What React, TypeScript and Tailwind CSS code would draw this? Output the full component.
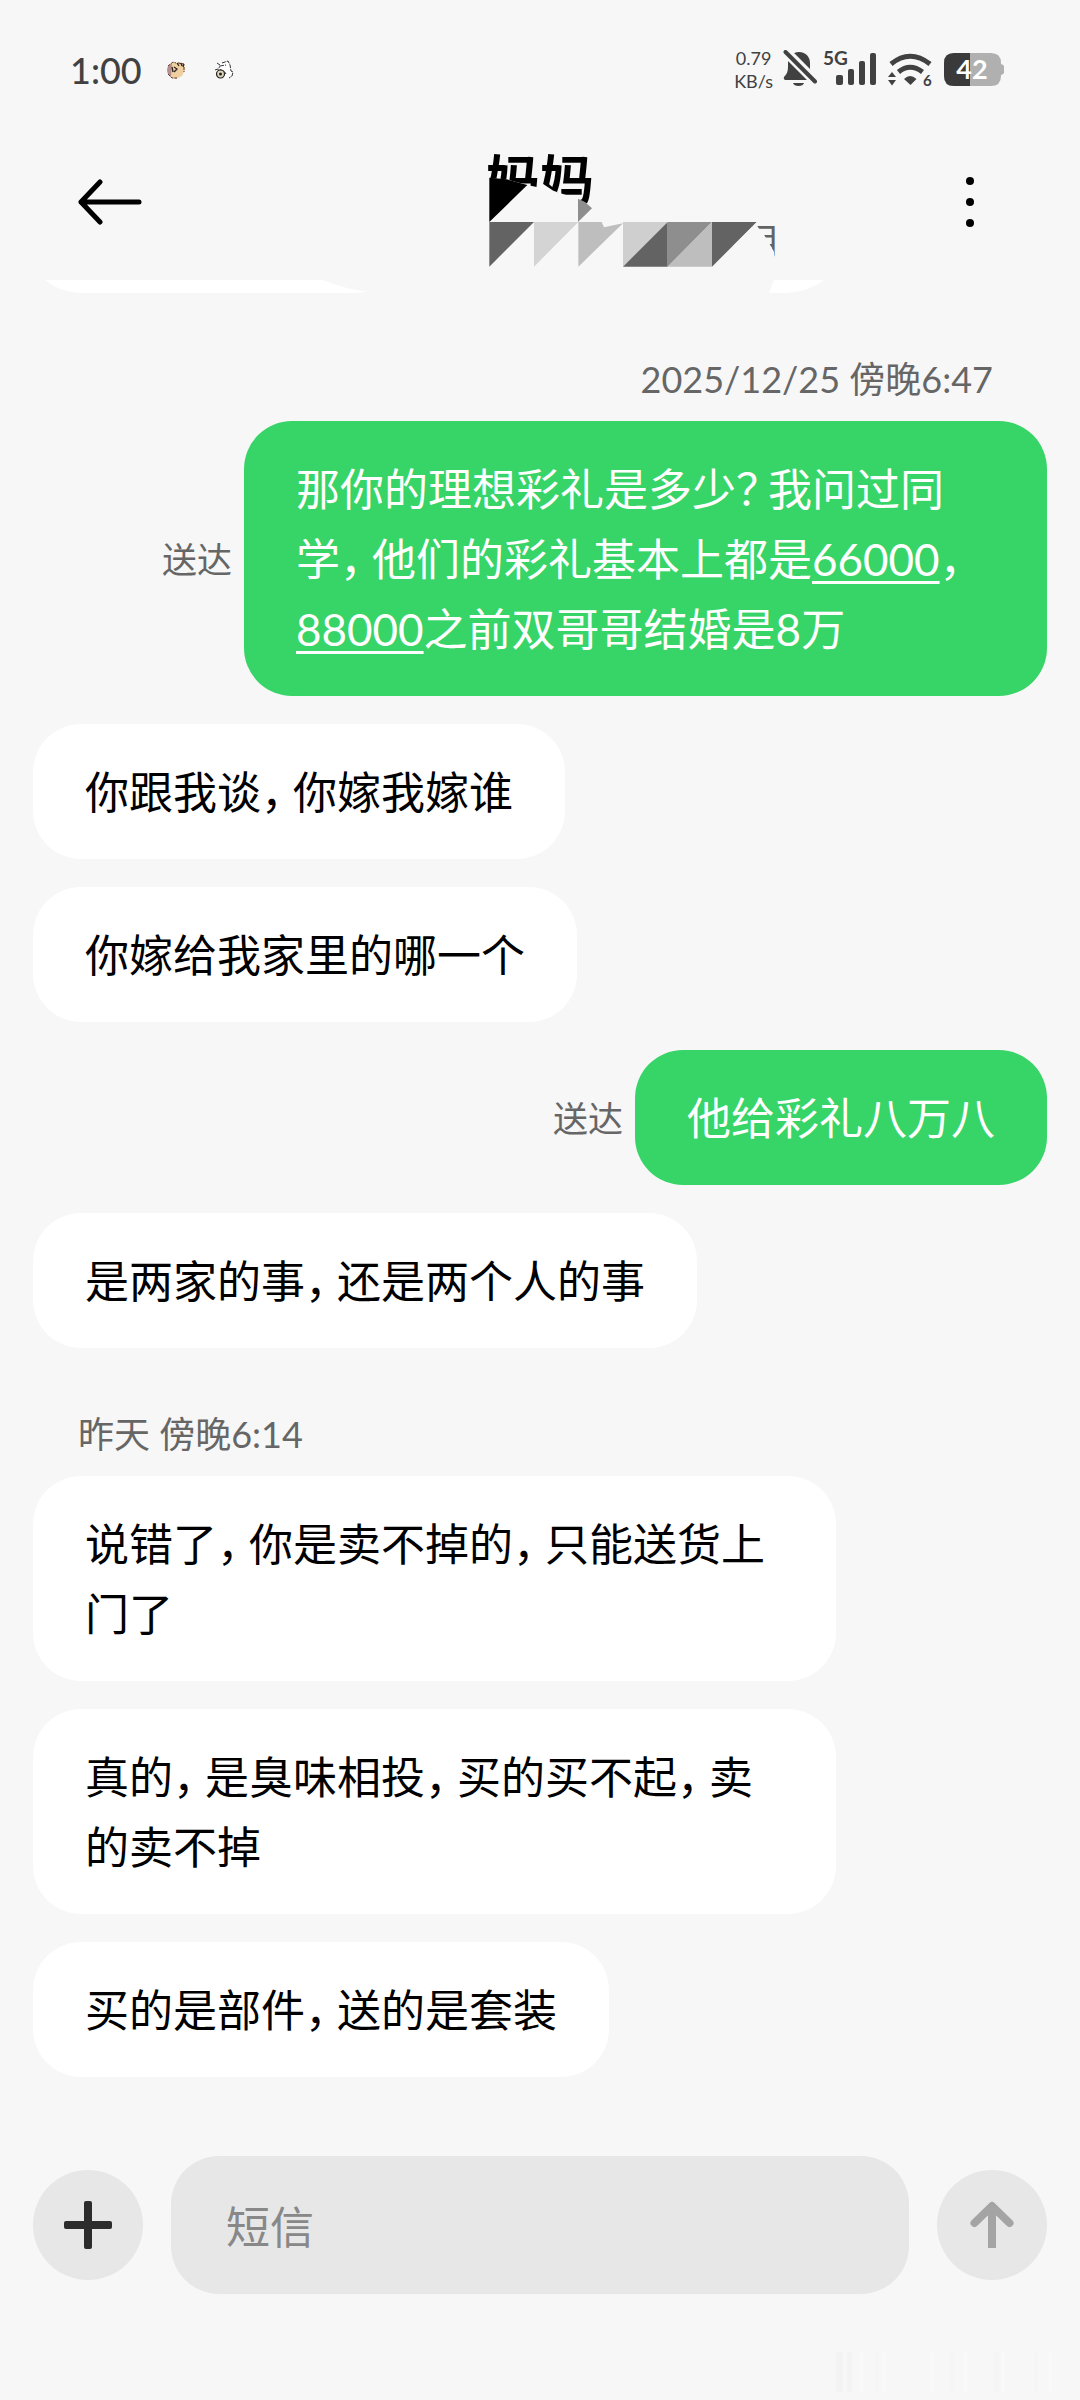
import type { ReactNode } from "react";

interface Message {
  id: number;
  from: "me" | "mom";
  text: string;
  stamp?: string;
}

const messages: Message[] = [
  {
    id: 1,
    from: "me",
    text: "那你的理想彩礼是多少？我问过同学，他们的彩礼基本上都是66000，88000之前双哥哥结婚是8万",
    stamp: "2025/12/25 傍晚6:47",
  },
  { id: 2, from: "mom", text: "你跟我谈，你嫁我嫁谁" },
  { id: 3, from: "mom", text: "你嫁给我家里的哪一个" },
  { id: 4, from: "me", text: "他给彩礼八万八" },
  { id: 5, from: "mom", text: "是两家的事，还是两个人的事" },
  { id: 6, from: "mom", text: "说错了，你是卖不掉的，只能送货上门了", stamp: "昨天 傍晚6:14" },
  { id: 7, from: "mom", text: "真的，是臭味相投，买的买不起，卖的卖不掉" },
  { id: 8, from: "mom", text: "买的是部件，送的是套装" },
];

// Half-width forms for punctuation, links for long numbers
function renderText(text: string): ReactNode[] {
  return text.split(/([，？]|\d{5,})/).map((part, i) => {
    if (part === "，" || part === "？") {
      return (
        <span key={i} className="mr-[10px] [font-feature-settings:'halt']">
          {part}
        </span>
      );
    }
    if (/^\d{5,}$/.test(part)) {
      return (
        <a key={i} href={`tel:${part}`} className="underline decoration-[3px] underline-offset-[5px]">
          {part}
        </a>
      );
    }
    return part;
  });
}

function StatusBar() {
  return (
    <div className="flex h-[140px] items-center justify-between pl-[70px] pr-[76px] text-[#414141]">
      <div className="flex items-center">
        <span className="text-[36px] font-medium leading-none">1:00</span>
        {/* Notification stickers */}
        <svg className="ml-6 size-5" viewBox="0 0 20 20" aria-hidden="true">
          <path d="M2 6 L7 2 L10 3 L13 2 L18 4 L19 10 L16 16 L10 19 L4 17 L1 12 Z" fill="#f0cfa0" />
          <path d="M2 6 L6 3 L5 17 L2 14 L1 10 Z" fill="#b58f8c" />
          <path d="M2 6 L7 2 L10 3 M12 3 L18 4 M18 7 L18 12 M2 14 L6 18 L11 18" fill="none" stroke="#5a3a34" strokeWidth="1" strokeDasharray="3 1" />
          <path d="M6 7 L7 12 M8 7 L11 9 L8 12 M11 3 L13 6 M15 3 L16 6 M18 4 L17 7" fill="none" stroke="#2b2020" strokeWidth="1.3" />
        </svg>
        <svg className="ml-7 size-5" viewBox="0 0 20 20" aria-hidden="true">
          <path d="M4 9 L5 5 L4 3 L8 3 L14 1 L16 5 L17 11 L19 12 L18 16 L15 18 L6 18 L2 16 L1 12 Z" fill="#fff" />
          <path d="M3 3 L6 5 L5 8 M8 3 L14 1 L16 5 L17 11 L19 12 L18 16 L15 18 M6 6 L12 5 M1 10 L4 9 L10 11 L12 14" fill="none" stroke="#333" strokeWidth="1" strokeDasharray="4 1" />
          <circle cx="6.500" cy="14" r="4" fill="#dcd6bc" stroke="#222" strokeWidth="1.2" />
          <circle cx="6.500" cy="14" r="1.5" fill="#222" />
        </svg>
      </div>

      <div className="flex items-center">
        <div className="text-center text-[18px] leading-[23px]">
          <div>0.79</div>
          <div>KB/s</div>
        </div>
        {/* Muted bell */}
        <svg className="ml-[10px] h-10 w-[34px]" viewBox="0 0 34 40" aria-hidden="true">
          <path d="M16 2 C23 2 27 7 27 13 L27 19 C27 23 29 25 31 28 L31 30 L2 30 Q0 29 1 27 C4 24 5 21 5 17 L5 13 C5 7 9 2 16 2 Z" fill="currentColor" />
          <path d="M10 33 L21 33 Q20 36 15.500 36 Q11 36 10 33 Z" fill="currentColor" />
          <path d="M0 -1 L36 35" stroke="#f7f7f7" strokeWidth="10" />
          <path d="M2.500 2 L32 31.500" stroke="currentColor" strokeWidth="4" strokeLinecap="round" />
        </svg>
        {/* Cell signal */}
        <svg className="ml-[6px] h-10 w-[54px] overflow-visible" viewBox="0 0 54 40" fill="currentColor" aria-hidden="true">
          <text x="0" y="15" fontSize="19" fontWeight="700">5G</text>
          <rect x="13" y="25" width="7" height="10" rx="2" />
          <rect x="25" y="19" width="6" height="16" rx="2" />
          <rect x="36" y="11" width="6" height="24" rx="2" />
          <rect x="47" y="3" width="6" height="32" rx="2" />
        </svg>
        {/* Wi-Fi 6 */}
        <svg className="ml-[11px] h-10 w-[44px] overflow-visible" viewBox="0 0 44 40" fill="currentColor" aria-hidden="true">
          <path d="M3 14 Q22 -1.500 42 14" fill="none" stroke="currentColor" strokeWidth="5" />
          <path d="M10.500 22 Q22 12.500 34.500 22" fill="none" stroke="currentColor" strokeWidth="5" />
          <path d="M16 29 Q22 23 28.500 29 L22.500 35 Z" />
          <path d="M4 22 L8 27 L0 27 Z M0 30 L8 30 L4 35.500 Z" />
          <text x="35" y="36" fontSize="15" fontWeight="700">6</text>
        </svg>
        {/* Battery */}
        <svg className="ml-3 h-10 w-[60px]" viewBox="0 0 60 40" aria-hidden="true">
          <path d="M10 3 H47 Q57 3 57 13 V26 Q57 36 47 36 H10 Q0 36 0 26 V13 Q0 3 10 3 Z" fill="#b0b0b0" />
          <path d="M57 14 Q61 15 60.500 19.500 Q61 24 57 25 Z" fill="#b0b0b0" />
          <path d="M10 3 H26 V36 H10 Q0 36 0 26 V13 Q0 3 10 3 Z" fill="#3a3a3a" />
          <text x="28" y="29" fontSize="27" fontWeight="700" textAnchor="middle" fill="#fff">42</text>
        </svg>
      </div>
    </div>
  );
}

// Faceted patches hiding the lower half of the title and the phone number
function PrivacyMosaic() {
  return (
    <svg
      className="pointer-events-none absolute left-1/2 top-[-10px] h-[170px] w-[600px] -translate-x-1/2"
      viewBox="-600 0 1800 510"
      aria-hidden="true"
    >
      <path d="M130 143 L200 148 L262 165 L290 171 L304 158 L340 182 L362 190 L413 206 L435 218 L470 230 L470 280 L130 280 Z" fill="#f7f7f7" />
      <path d="M148 143 L200 148 L262 165 L148 276 Z" fill="#000" />
      <path d="M414 206 L435 216 L456 235 L414 276 Z" fill="#8e8e8e" />
      <path d="M148 276 H282 L148 410 Z" fill="#636363" />
      <path d="M282 276 H415 L282 410 Z" fill="#d4d4d4" />
      <path d="M415 276 H485 L492 292 L549 280 L415 410 Z" fill="#bebebe" />
      <path d="M549 276 H683 L549 410 Z" fill="#cfcfcf" />
      <path d="M683 276 V410 H549 Z" fill="#636363" />
      <path d="M683 276 H816 L683 410 Z" fill="#8e8e8e" />
      <path d="M816 276 V410 H683 Z" fill="#bebebe" />
      <path d="M816 276 H950 L816 410 Z" fill="#636363" />
      <text x="915" y="375" fontSize="108" fill="#636363">月</text>
      <path d="M950 277 L953 290 L972 314 L985 335 L1002 365 L1005 400 L880 400 L880 347 Z" fill="#f7f7f7" />
    </svg>
  );
}

function Header() {
  return (
    <header className="relative grid h-[140px] grid-cols-[1fr_auto_1fr] items-center px-[78px] pb-4">
      <button type="button" aria-label="返回" className="justify-self-start">
        <svg className="h-12 w-16" viewBox="0 0 64 48" fill="none" stroke="#000" strokeWidth="5" strokeLinecap="round" strokeLinejoin="round" aria-hidden="true">
          <path d="M61 24 H3 M22 4 L3 24 L22 44" />
        </svg>
      </button>
      <div className="text-center">
        <h1 className="text-[54px] font-semibold leading-[78px] text-black">妈妈</h1>
        <div className="h-[42px]" />
      </div>
      <button type="button" aria-label="更多" className="justify-self-end">
        <svg className="h-14 w-16" viewBox="0 0 64 56" aria-hidden="true">
          <circle cx="32" cy="7" r="4" />
          <circle cx="32" cy="28" r="4" />
          <circle cx="32" cy="49" r="4" />
        </svg>
      </button>
      <PrivacyMosaic />
    </header>
  );
}

function MessageRow({ message }: { message: Message }) {
  const mine = message.from === "me";
  return (
    <li className={message.stamp ? "pt-[34px]" : ""}>
      {message.stamp && (
        <time
          className={[
            "mb-[18px] block pl-[45px] pr-[54px] text-[36px] leading-[48px] text-[#666]",
            mine ? "text-right" : "text-left",
          ].join(" ")}
        >
          {message.stamp}
        </time>
      )}
      <div className={["flex items-center gap-3", mine ? "justify-end" : ""].join(" ")}>
        {mine && <span className="shrink-0 text-[35px] leading-[48px] text-[#666]">送达</span>}
        <p
          className={[
            "max-w-[803px] rounded-[48px] px-[52px] pb-8 pt-[33px] text-[44px] leading-[70px]",
            mine ? "bg-[#37d468] text-white" : "bg-white text-black",
          ].join(" ")}
        >
          {renderText(message.text)}
        </p>
      </div>
    </li>
  );
}

function Composer() {
  return (
    <form className="mt-auto flex items-center gap-7 px-[33px] pb-[106px]" onSubmit={(e) => e.preventDefault()}>
      <button type="button" aria-label="添加" className="flex size-[110px] shrink-0 items-center justify-center rounded-full bg-[#e7e7e7]">
        <svg className="size-12" viewBox="0 0 48 48" fill="#2c2c2c" aria-hidden="true">
          <rect x="20" y="0" width="8" height="48" rx="2" />
          <rect x="0" y="20" width="48" height="8" rx="2" />
        </svg>
      </button>
      <input
        type="text"
        aria-label="短信"
        placeholder="短信"
        className="h-[138px] min-w-0 flex-1 rounded-[48px] bg-[#e7e7e7] px-[55px] pt-1 text-[44px] text-black outline-none placeholder:text-[#888]"
      />
      <button type="submit" aria-label="发送" className="flex size-[110px] shrink-0 items-center justify-center rounded-full bg-[#e7e7e7]">
        <svg className="size-12" viewBox="0 0 48 48" fill="none" stroke="#a4a4a4" strokeWidth="8" strokeLinejoin="round" aria-hidden="true">
          <path d="M24 6 V47" />
          <path d="M6.500 22 L24 5 L41.500 22" strokeLinecap="round" />
        </svg>
      </button>
    </form>
  );
}

// Barely visible streaks in the bottom right corner
function FaintMark() {
  return (
    <svg className="pointer-events-none absolute bottom-2 right-2 h-10 w-60" viewBox="0 0 240 40" aria-hidden="true">
      <path d="M4 0h7v40h-7z M15 0h5v40h-5z" fill="#f3f3f3" />
      <path d="M43 0h4v40h-4z M118 0h4v40h-4z M162 0h5v40h-5z M202 0h4v40h-4z" fill="#f5f5f5" />
      <path d="M28 0h3v40h-3z M50 0h4v40h-4z M98 0h4v40h-4z M132 0h3v40h-3z M170 0h3v40h-3z M216 0h4v40h-4z" fill="#f9f9f9" />
    </svg>
  );
}

export default function App() {
  return (
    <main className="relative flex min-h-screen flex-col bg-[#f7f7f7] font-[Lato,'Noto_Sans_CJK_SC',sans-serif]" lang="zh-CN">
      <StatusBar />
      <Header />
      {/* Bottom edge of the bubble scrolled under the header */}
      <svg className="ml-[33px] h-[13px] w-[803px]" viewBox="0 0 803 13" fill="#fff" aria-hidden="true">
        <path d="M12 0 H290 Q312 9 335 12 L320 13 H48 Q26 12 12 0 Z" />
        <path d="M741 0 H791 Q776 12 752 13 H736 Z" />
      </svg>
      <ul className="flex flex-col gap-7 px-[33px] pt-7">
        {messages.map((message) => (
          <MessageRow key={message.id} message={message} />
        ))}
      </ul>
      <Composer />
      <FaintMark />
    </main>
  );
}
